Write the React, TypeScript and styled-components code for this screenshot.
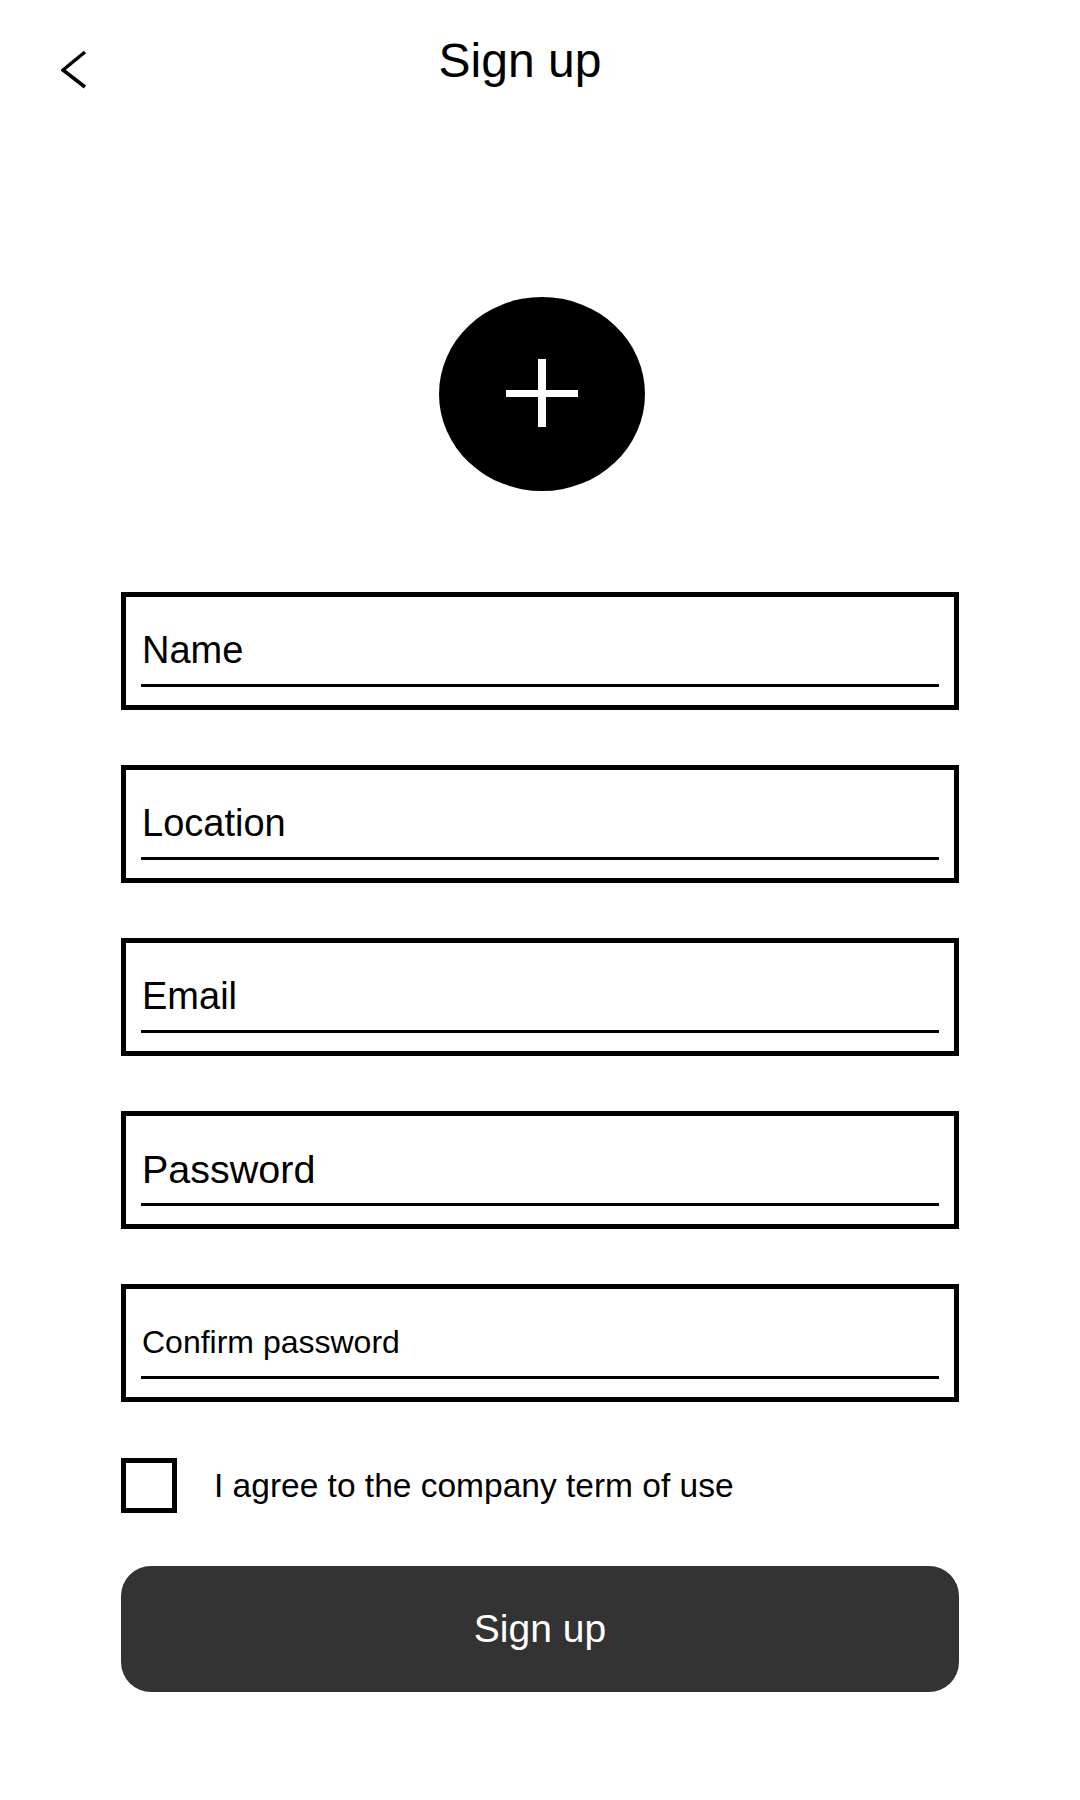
import styled, { createGlobalStyle } from 'styled-components'

const GlobalStyle = createGlobalStyle`
  body {
    margin: 0;
    background: #ffffff;
    font-family: 'Liberation Sans', Arial, sans-serif;
    color: #000000;
  }
`

const Page = styled.div`
  width: 1080px;
  min-height: 1800px;
  display: flex;
  flex-direction: column;
  background: #ffffff;
`

const Header = styled.header`
  display: grid;
  grid-template-columns: 60px 1fr 100px;
  align-items: start;
  padding: 37px 40px 0;
`

const BackButton = styled.button`
  margin-top: 13px;
  padding: 0 0 0 21px;
  border: none;
  background: none;
  display: flex;
  cursor: pointer;
`

const Title = styled.h1`
  margin: 0;
  font-size: 48px;
  line-height: 47px;
  font-weight: 400;
  text-align: center;
`

const AvatarButton = styled.button`
  align-self: center;
  margin: 207px 0 0 4px;
  width: 206px;
  height: 194px;
  border: none;
  border-radius: 50%;
  background: #000000;
  display: flex;
  align-items: center;
  justify-content: center;
  cursor: pointer;
`

const Form = styled.form`
  width: 838px;
  margin: 101px auto 0;
  display: flex;
  flex-direction: column;
`

const FieldList = styled.div`
  display: flex;
  flex-direction: column;
  gap: 55px;
`

const Field = styled.div`
  box-sizing: border-box;
  height: 118px;
  border: 5px solid #000000;
  padding: 34px 15px 0;
`

const FieldLabel = styled.div<{ $size: number }>`
  font-size: ${({ $size }) => $size}px;
  line-height: 38px;
  padding: 0 0 15px 1px;
  border-bottom: 3px solid #000000;
`

const AgreeRow = styled.label`
  margin-top: 56px;
  display: flex;
  align-items: center;
  gap: 37px;
  font-size: 33.5px;
  line-height: 40px;
`

const CheckBox = styled.span`
  box-sizing: border-box;
  width: 56px;
  height: 55px;
  border: 5px solid #000000;
  flex-shrink: 0;
`

const SubmitButton = styled.button`
  margin-top: 53px;
  height: 126px;
  border: none;
  border-radius: 30px;
  background: #333333;
  color: #ffffff;
  font-family: 'Liberation Sans', Arial, sans-serif;
  font-size: 39px;
  cursor: pointer;
`

const fields = [
  { label: 'Name', size: 38 },
  { label: 'Location', size: 38 },
  { label: 'Email', size: 38 },
  { label: 'Password', size: 39.5 },
  { label: 'Confirm password', size: 32 },
]

export default function App() {
  return (
    <Page>
      <GlobalStyle />
      <Header>
        <BackButton aria-label="Back">
          <svg width="26" height="40" viewBox="0 0 26 40">
            <polyline points="24,2 2,20 24,37" fill="none" stroke="#000" strokeWidth="3.5" />
          </svg>
        </BackButton>
        <Title>Sign up</Title>
        <div />
      </Header>

      <AvatarButton aria-label="Add photo">
        <svg width="72" height="70" viewBox="0 0 72 70">
          <rect x="0" y="31" width="72" height="7" fill="#fff" />
          <rect x="32" y="0" width="8" height="68" fill="#fff" />
        </svg>
      </AvatarButton>

      <Form onSubmit={e => e.preventDefault()}>
        <FieldList>
          {fields.map(f => (
            <Field key={f.label}>
              <FieldLabel $size={f.size}>{f.label}</FieldLabel>
            </Field>
          ))}
        </FieldList>

        <AgreeRow>
          <CheckBox />
          I agree to the company term of use
        </AgreeRow>

        <SubmitButton type="submit">Sign up</SubmitButton>
      </Form>
    </Page>
  )
}
